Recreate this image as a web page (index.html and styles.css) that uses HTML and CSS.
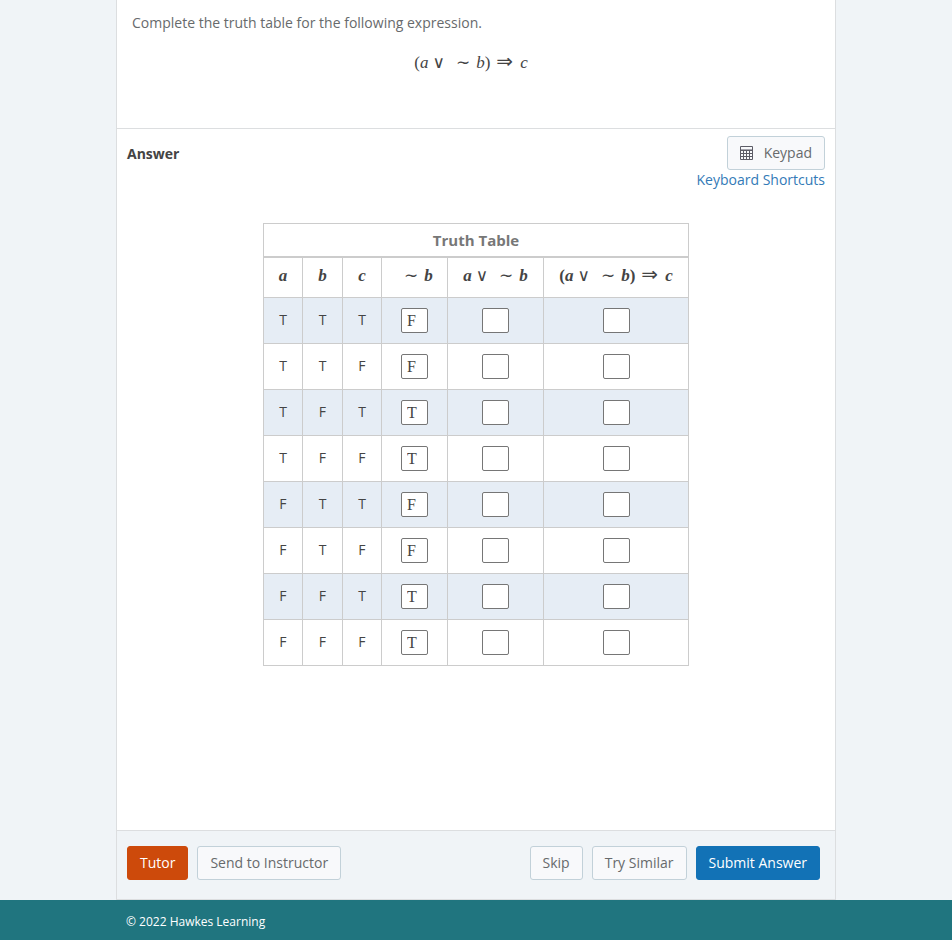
FILE: index.html
```html
<!DOCTYPE html>
<html lang="en">
<head>
    <meta charset="UTF-8">
    <meta name="viewport" content="width=device-width, initial-scale=1.0">
    <title>Truth Table</title>
    <link rel="stylesheet" href="styles.css">
</head>
<body>

    <main class="page">
        <section class="question">
            <p class="prompt">Complete the truth table for the following expression.</p>
            <div class="math expression">(<i>a</i><span class="or">∨</span><span class="not">∼</span><i>b</i>)<span class="implies">⇒</span><i>c</i></div>
        </section>

        <section class="answer">
            <div class="answer-header">
                <h2>Answer</h2>
                <div class="answer-tools">
                    <button type="button" class="btn keypad">
                        <svg width="13" height="14" viewBox="0 0 13 14" fill="none" stroke="#5c5c66" aria-hidden="true">
                            <path d="M.5 .5h12v13H.5z M.5 4.5h12 M.5 7.5h12 M.5 10.5h12 M3.5 4v9 M6.5 4v9 M9.5 4v9"/>
                            <path d="M1 3.5h11" stroke="#a5a5ad"/>
                        </svg>
                        Keypad
                    </button>
                    <a href="#">Keyboard Shortcuts</a>
                </div>
            </div>

            <table class="truth-table">
                <colgroup>
                    <col class="col-var"><col class="col-var-wide"><col class="col-var">
                    <col class="col-not"><col class="col-or"><col class="col-implies">
                </colgroup>
                <thead>
                    <tr class="title-row"><th colspan="6">Truth Table</th></tr>
                    <tr class="math head-row">
                        <th><i>a</i></th>
                        <th><i>b</i></th>
                        <th><i>c</i></th>
                        <th><span class="not">∼</span><i>b</i></th>
                        <th><i>a</i><span class="or">∨</span><span class="not">∼</span><i>b</i></th>
                        <th>(<i>a</i><span class="or">∨</span><span class="not">∼</span><i>b</i>)<span class="implies">⇒</span><i>c</i></th>
                    </tr>
                </thead>
                <tbody>
                    <tr>
                        <td>T</td><td>T</td><td>T</td>
                        <td><input type="text" maxlength="1" value="F" aria-label="Row 1, not b"></td>
                        <td><input type="text" maxlength="1" aria-label="Row 1, a or not b"></td>
                        <td><input type="text" maxlength="1" aria-label="Row 1, expression"></td>
                    </tr>
                    <tr>
                        <td>T</td><td>T</td><td>F</td>
                        <td><input type="text" maxlength="1" value="F" aria-label="Row 2, not b"></td>
                        <td><input type="text" maxlength="1" aria-label="Row 2, a or not b"></td>
                        <td><input type="text" maxlength="1" aria-label="Row 2, expression"></td>
                    </tr>
                    <tr>
                        <td>T</td><td>F</td><td>T</td>
                        <td><input type="text" maxlength="1" value="T" aria-label="Row 3, not b"></td>
                        <td><input type="text" maxlength="1" aria-label="Row 3, a or not b"></td>
                        <td><input type="text" maxlength="1" aria-label="Row 3, expression"></td>
                    </tr>
                    <tr>
                        <td>T</td><td>F</td><td>F</td>
                        <td><input type="text" maxlength="1" value="T" aria-label="Row 4, not b"></td>
                        <td><input type="text" maxlength="1" aria-label="Row 4, a or not b"></td>
                        <td><input type="text" maxlength="1" aria-label="Row 4, expression"></td>
                    </tr>
                    <tr>
                        <td>F</td><td>T</td><td>T</td>
                        <td><input type="text" maxlength="1" value="F" aria-label="Row 5, not b"></td>
                        <td><input type="text" maxlength="1" aria-label="Row 5, a or not b"></td>
                        <td><input type="text" maxlength="1" aria-label="Row 5, expression"></td>
                    </tr>
                    <tr>
                        <td>F</td><td>T</td><td>F</td>
                        <td><input type="text" maxlength="1" value="F" aria-label="Row 6, not b"></td>
                        <td><input type="text" maxlength="1" aria-label="Row 6, a or not b"></td>
                        <td><input type="text" maxlength="1" aria-label="Row 6, expression"></td>
                    </tr>
                    <tr>
                        <td>F</td><td>F</td><td>T</td>
                        <td><input type="text" maxlength="1" value="T" aria-label="Row 7, not b"></td>
                        <td><input type="text" maxlength="1" aria-label="Row 7, a or not b"></td>
                        <td><input type="text" maxlength="1" aria-label="Row 7, expression"></td>
                    </tr>
                    <tr>
                        <td>F</td><td>F</td><td>F</td>
                        <td><input type="text" maxlength="1" value="T" aria-label="Row 8, not b"></td>
                        <td><input type="text" maxlength="1" aria-label="Row 8, a or not b"></td>
                        <td><input type="text" maxlength="1" aria-label="Row 8, expression"></td>
                    </tr>
                </tbody>
            </table>
        </section>

        <div class="actions">
            <button type="button" class="btn btn-tutor">Tutor</button>
            <button type="button" class="btn">Send to Instructor</button>
            <button type="button" class="btn btn-skip">Skip</button>
            <button type="button" class="btn">Try Similar</button>
            <button type="button" class="btn btn-submit">Submit Answer</button>
        </div>
    </main>

    <footer class="footer">
        <div class="footer-inner">© 2022 Hawkes Learning</div>
    </footer>

</body>
</html>
```
FILE: styles.css
```css
* {
    box-sizing: border-box;
}

body {
    margin: 0;
    min-height: 100vh;
    display: flex;
    flex-direction: column;
    background-color: #f0f4f7;
    font-family: "Open Sans", sans-serif;
    font-size: 14px;
    line-height: 20px;
    color: #676a6c;
}

.page {
    flex: 1;
    display: flex;
    flex-direction: column;
    width: 100%;
    max-width: 720px;
    margin: 0 auto;
    background-color: #fff;
    border: 1px solid #dcdee0;
    border-top: none;
}

.question {
    padding: 13px 15px 55px;
    border-bottom: 1px solid #dcdee0;
}

.prompt {
    margin: 0 0 20px;
}

.math {
    font-family: "Liberation Serif", serif;
    font-size: 17px;
    color: #444;
    white-space: nowrap;
}

.expression {
    text-align: center;
    padding-right: 10px;
}

/* operators: no line-height so they don't stretch the line */
.or,
.not,
.implies {
    font-family: "DejaVu Sans", sans-serif;
    font-weight: normal;
    line-height: 0;
}

.or {
    margin-left: 4px;
    font-size: 17px;
}

.not {
    margin: 0 6px 0 8px;
    font-size: 17px;
}

.or + .not {
    margin-left: 11px;
}

.implies {
    margin: 0 7px 0 6px;
    font-size: 20px;
}

.answer {
    flex: 1;
    padding: 7px 10px 20px;
}

.answer-header {
    display: flex;
    justify-content: space-between;
    align-items: flex-start;
}

.answer-header h2 {
    margin: 8px 0 0;
    font-size: 14px;
    font-weight: 700;
    color: #444;
}

.answer-tools {
    display: flex;
    flex-direction: column;
    align-items: flex-end;
}

.answer-tools a {
    color: #337ab7;
    text-decoration: none;
}

.btn {
    height: 34px;
    padding: 0 12px;
    border: 1px solid #c2d1d9;
    border-radius: 3px;
    background-color: #f8f9fb;
    color: #676a6c;
    font-family: inherit;
    font-size: 14px;
    line-height: 20px;
    cursor: pointer;
}

.keypad {
    display: flex;
    align-items: center;
    gap: 11px;
}

.truth-table {
    margin: 33px auto 0;
    border-collapse: collapse;
    table-layout: fixed;
    width: 426px;
    color: #444;
    font-size: 14px;
}

.truth-table th,
.truth-table td {
    padding: 0 0 2px;
    border: 1px solid #ccc;
    text-align: center;
    vertical-align: middle;
}

.col-var {
    width: 39px;
}

.col-var-wide {
    width: 40px;
}

.col-not {
    width: 66px;
}

.col-or {
    width: 96px;
}

.col-implies {
    width: 145px;
}

.title-row {
    height: 33px;
}

.truth-table .title-row th {
    padding: 0;
    border-bottom-width: 2px;
    font-size: 15px;
    color: #777;
}

.head-row {
    height: 41px;
}

.truth-table tbody tr {
    height: 46px;
}

.truth-table tbody tr:nth-child(odd) {
    background-color: #e6edf5;
}

.truth-table td:has(input) {
    padding: 0;
}

.truth-table input {
    display: block;
    width: 27px;
    height: 25px;
    margin: 0 auto;
    padding: 0 5px;
    border: 1px solid #767676;
    border-radius: 2px;
    background-color: #fff;
    color: #444;
    font-family: "Liberation Serif", serif;
    font-size: 16px;
}

.actions {
    display: flex;
    gap: 9px;
    padding: 15px 15px 19px 10px;
    border-top: 1px solid #dcdee0;
    background-color: #f0f4f7;
}

.btn-skip {
    margin-left: auto;
}

.btn-tutor {
    border-color: #cd4a0b;
    background-color: #cd4a0b;
    color: #fff;
}

.btn-submit {
    border-color: #1272b6;
    background-color: #1272b6;
    color: #fff;
}

.footer {
    background-color: #20757f;
    color: #fff;
    font-size: 12px;
}

.footer-inner {
    max-width: 720px;
    margin: 0 auto;
    padding: 12px 10px 8px;
}
```
